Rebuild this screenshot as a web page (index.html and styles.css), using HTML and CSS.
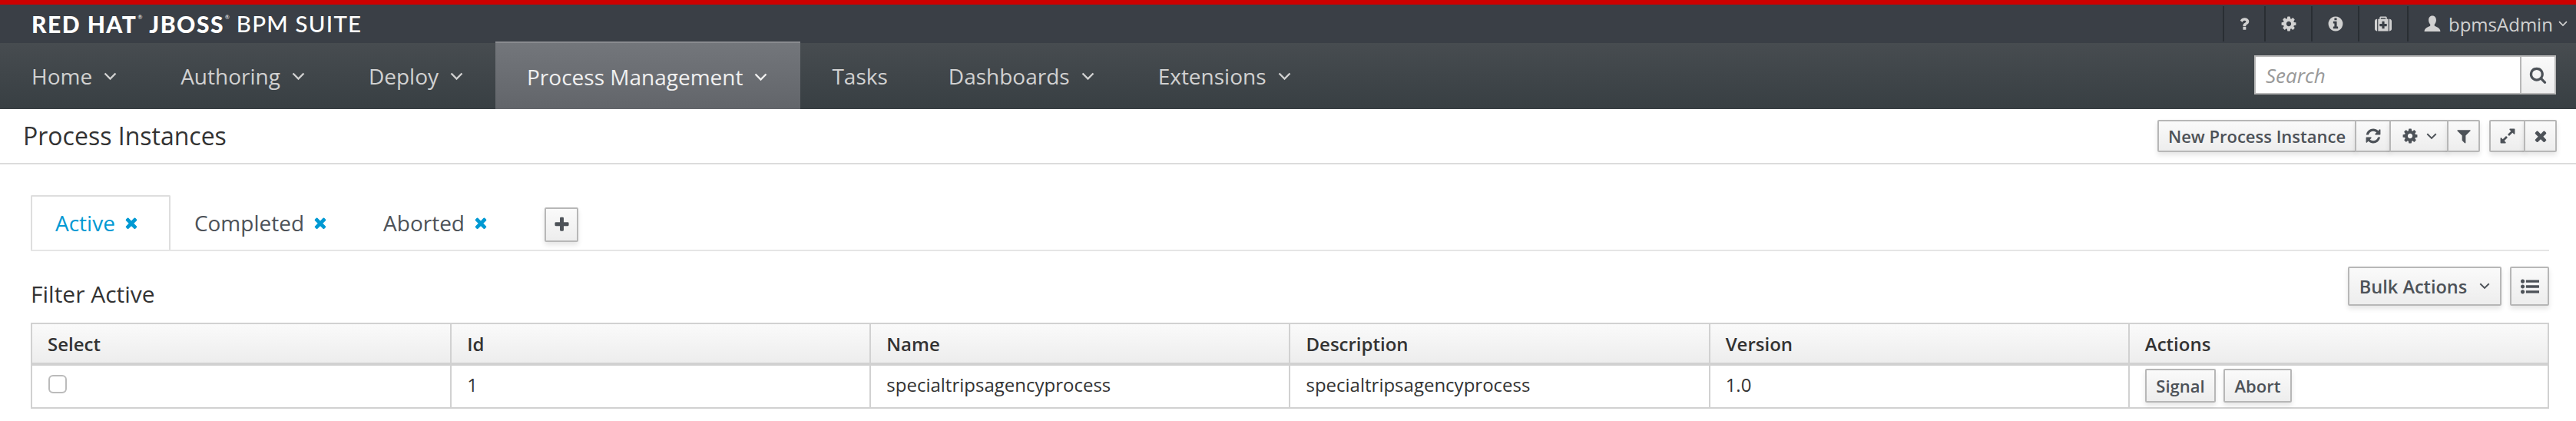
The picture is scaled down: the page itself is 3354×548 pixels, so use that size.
FILE: index.html
```html
<!DOCTYPE html>
<html lang="en">
<head>
<meta charset="utf-8">
<title>Process Instances</title>
<link rel="stylesheet" href="styles.css">
</head>
<body>
<svg class="defs" width="0" height="0" aria-hidden="true">
  <defs>
    <symbol id="i-cog" viewBox="0 0 1792 1792"><path d="M1152 896q0-106-75-181t-181-75-181 75-75 181 75 181 181 75 181-75 75-181zm512-109v222q0 12-8 23t-20 13l-185 28q-19 54-39 91 35 50 107 138 10 12 10 25t-9 23q-27 37-99 108t-94 71q-12 0-26-9l-138-108q-44 23-91 38-16 136-29 186-7 28-36 28h-222q-14 0-24.5-8.5t-11.5-21.5l-28-184q-49-16-90-37l-141 107q-10 9-25 9-14 0-25-11-126-114-165-168-7-10-7-23 0-12 8-23 15-21 51-66.5t54-70.5q-27-50-41-99l-183-27q-13-2-21-12.5t-8-23.5v-222q0-12 8-23t19-13l186-28q14-46 39-92-40-57-107-138-10-12-10-24 0-10 9-23 26-36 98.5-107.5t94.5-71.5q13 0 26 10l138 107q44-23 91-38 16-136 29-186 7-28 36-28h222q14 0 24.5 8.5t11.5 21.5l28 184q49 16 90 37l142-107q9-9 24-9 13 0 25 10 129 119 165 170 7 8 7 22 0 12-8 23-15 21-51 66.5t-54 70.5q26 50 41 98l183 28q13 2 21 12.5t8 23.5z"/></symbol>
    <symbol id="i-info" viewBox="0 0 1792 1792"><path d="M1152 1376v-160q0-14-9-23t-23-9h-96v-512q0-14-9-23t-23-9h-320q-14 0-23 9t-9 23v160q0 14 9 23t23 9h96v320h-96q-14 0-23 9t-9 23v160q0 14 9 23t23 9h448q14 0 23-9t9-23zm-128-896v-160q0-14-9-23t-23-9h-192q-14 0-23 9t-9 23v160q0 14 9 23t23 9h192q14 0 23-9t9-23zm640 416q0 209-103 385.5t-279.5 279.5-385.5 103-385.5-103-279.5-279.5-103-385.5 103-385.5 279.5-279.5 385.5-103 385.5 103 279.5 279.5 103 385.5z"/></symbol>
    <symbol id="i-medkit" viewBox="0 0 1792 1792"><path d="M1280 1120v-192q0-14-9-23t-23-9h-224v-224q0-14-9-23t-23-9h-192q-14 0-23 9t-9 23v224h-224q-14 0-23 9t-9 23v192q0 14 9 23t23 9h224v224q0 14 9 23t23 9h192q14 0 23-9t9-23v-224h224q14 0 23-9t9-23zm-640-736h512v-128h-512v128zm-384 0v1280h-32q-92 0-158-66t-66-158v-832q0-92 66-158t158-66h32zm1184 0v1280h-1088v-1280h160v-160q0-40 28-68t68-28h576q40 0 68 28t28 68v160h160zm352 224v832q0 92-66 158t-158 66h-32v-1280h32q92 0 158 66t66 158z"/></symbol>
    <symbol id="i-question" viewBox="0 0 1792 1792"><path d="M1088 1256v240q0 16-12 28t-28 12h-240q-16 0-28-12t-12-28v-240q0-16 12-28t28-12h240q16 0 28 12t12 28zm316-600q0 54-15.5 101t-35 76.5-55 59.5-57.5 43.5-61 35.5q-41 23-68.5 65t-27.5 67q0 17-12 32.5t-28 15.5h-240q-15 0-25.5-18.5t-10.5-37.5v-45q0-83 65-156.5t143-108.5q59-27 84-56t25-76q0-42-46.5-74t-107.5-32q-65 0-108 29-35 25-107 115-13 16-31 16-12 0-25-8l-164-125q-13-10-15.5-25t5.5-28q160-266 464-266 80 0 161 31t146 83 106 127.5 41 158.5z"/></symbol>
    <symbol id="i-user" viewBox="0 0 40 40"><path d="M20 1c6 0 9 4.500 9 10.500 0 4-1.600 7.500-3.800 9.800-.6.700-.6 2.700.3 3.500 2.300 2 13 3.700 13.500 13.200H1c.5-9.500 11.200-11.200 13.500-13.200.9-.8.900-2.800.3-3.500C12.600 19 11 15.500 11 11.500 11 5.500 14 1 20 1z"/></symbol>
    <symbol id="i-refresh" viewBox="0 0 1792 1792"><path d="M1639 1056q0 5-1 7-64 268-268 434.500t-478 166.500q-146 0-282.500-55t-243.500-157l-129 129q-19 19-45 19t-45-19-19-45v-448q0-26 19-45t45-19h448q26 0 45 19t19 45-19 45l-137 137q71 66 161 102t187 36q134 0 250-65t186-179q11-17 53-117 8-23 30-23h192q13 0 22.500 9.500t9.500 22.500zm25-800v448q0 26-19 45t-45 19h-448q-26 0-45-19t-19-45 19-45l138-138q-148-137-349-137-134 0-250 65t-186 179q-11 17-53 117-8 23-30 23h-199q-13 0-22.500-9.500t-9.500-22.500v-7q65-268 270-434.500t480-166.500q146 0 284 55.500t245 156.500l130-129q19-19 45-19t45 19 19 45z"/></symbol>
    <symbol id="i-filter" viewBox="0 0 1792 1792"><path d="M1595 295q17 41-14 70l-493 493v742q0 42-39 59-13 5-25 5-27 0-45-19l-256-256q-19-19-19-45v-486l-493-493q-31-29-14-70 17-39 59-39h1280q42 0 59 39z"/></symbol>
    <symbol id="i-expand" viewBox="0 0 1792 1792"><path d="M883 1056q0 13-10 23l-332 332 144 144q19 19 19 45t-19 45-45 19h-448q-26 0-45-19t-19-45v-448q0-26 19-45t45-19 45 19l144 144 332-332q10-10 23-10t23 10l114 114q10 10 10 23zm781-864v448q0 26-19 45t-45 19-45-19l-144-144-332 332q-10 10-23 10t-23-10l-114-114q-10-10-10-23t10-23l332-332-144-144q-19-19-19-45t19-45 45-19h448q26 0 45 19t19 45z"/></symbol>
    <symbol id="i-times" viewBox="0 0 1792 1792"><path d="M1490 1322q0 40-28 68l-136 136q-28 28-68 28t-68-28l-294-294-294 294q-28 28-68 28t-68-28l-136-136q-28-28-28-68t28-68l294-294-294-294q-28-28-28-68t28-68l136-136q28-28 68-28t68 28l294 294 294-294q28-28 68-28t68 28l136 136q28 28 28 68t-28 68l-294 294 294 294q28 28 28 68z"/></symbol>
    <symbol id="i-plus" viewBox="0 0 1792 1792"><path d="M1600 736v192q0 40-28 68t-68 28h-416v416q0 40-28 68t-68 28h-192q-40 0-68-28t-28-68v-416h-416q-40 0-68-28t-28-68v-192q0-40 28-68t68-28h416v-416q0-40 28-68t68-28h192q40 0 68 28t28 68v416h416q40 0 68 28t28 68z"/></symbol>
    <symbol id="i-search" viewBox="0 0 1792 1792"><path d="M1216 832q0-185-131.500-316.500t-316.500-131.500-316.500 131.500-131.500 316.500 131.500 316.500 316.500 131.500 316.500-131.500 131.500-316.500zm512 832q0 52-38 90t-90 38q-54 0-90-38l-343-342q-179 124-399 124-143 0-273.500-55.500t-225-150-150-225-55.500-273.500 55.500-273.500 150-225 225-150 273.500-55.500 273.500 55.500 225 150 150 225 55.500 273.500q0 220-124 399l343 343q37 37 37 90z"/></symbol>
    <symbol id="i-list" viewBox="0 0 1792 1792"><path d="M384 1408q0 80-56 136t-136 56-136-56-56-136 56-136 136-56 136 56 56 136zm0-512q0 80-56 136t-136 56-136-56-56-136 56-136 136-56 136 56 56 136zm1408 416v192q0 13-9.500 22.500t-22.500 9.500h-1216q-13 0-22.500-9.500t-9.500-22.500v-192q0-13 9.500-22.500t22.500-9.500h1216q13 0 22.500 9.500t9.500 22.500zm-1408-928q0 80-56 136t-136 56-136-56-56-136 56-136 136-56 136 56 56 136zm1408 416v192q0 13-9.500 22.500t-22.500 9.500h-1216q-13 0-22.500-9.500t-9.500-22.500v-192q0-13 9.500-22.500t22.500-9.500h1216q13 0 22.500 9.500t9.500 22.500zm0-512v192q0 13-9.500 22.500t-22.500 9.500h-1216q-13 0-22.500-9.500t-9.500-22.500v-192q0-13 9.500-22.500t22.500-9.500h1216q13 0 22.500 9.500t9.500 22.500z"/></symbol>
    <symbol id="i-caret" viewBox="0 0 17 11"><path d="M1.500 1.500 8.500 8.500l7-7" fill="none" stroke="currentColor" stroke-width="2.400"/></symbol>
  </defs>
</svg>

<header class="masthead">
  <div class="logo">
    <span class="logo-strong">RED HAT</span><sup class="logo-mark">®</sup>
    <span class="logo-strong">JBOSS</span><sup class="logo-mark">®</sup>
    <span class="logo-light">BPM SUITE</span>
  </div>
  <ul class="util">
    <li class="util-item util-help"><svg class="util-ic"><use href="#i-question"/></svg></li>
    <li class="util-item util-cog"><svg class="util-ic"><use href="#i-cog"/></svg></li>
    <li class="util-item util-info"><svg class="util-ic"><use href="#i-info"/></svg></li>
    <li class="util-item util-med"><svg class="util-ic"><use href="#i-medkit"/></svg></li>
    <li class="util-item util-user"><svg class="util-ic-user"><use href="#i-user"/></svg><span>bpmsAdmin</span><svg class="caret"><use href="#i-caret"/></svg></li>
  </ul>
</header>

<nav class="nav">
  <a class="nav-item nav-drop">Home<svg class="caret"><use href="#i-caret"/></svg></a>
  <a class="nav-item nav-drop">Authoring<svg class="caret"><use href="#i-caret"/></svg></a>
  <a class="nav-item nav-drop">Deploy<svg class="caret"><use href="#i-caret"/></svg></a>
  <a class="nav-item nav-drop nav-active">Process Management<svg class="caret"><use href="#i-caret"/></svg></a>
  <a class="nav-item nav-plain">Tasks</a>
  <a class="nav-item nav-drop">Dashboards<svg class="caret"><use href="#i-caret"/></svg></a>
  <a class="nav-item nav-drop">Extensions<svg class="caret"><use href="#i-caret"/></svg></a>
  <form class="search">
    <input class="search-input" type="text" placeholder="Search">
    <button class="search-btn" type="button"><svg class="ic-search"><use href="#i-search"/></svg></button>
  </form>
</nav>

<div class="titlebar">
  <h1 class="title">Process Instances</h1>
  <div class="tools">
    <div class="btn-group">
      <button class="btn btn-new" type="button">New Process Instance</button>
      <button class="btn btn-refresh" type="button"><svg class="ic"><use href="#i-refresh"/></svg></button>
      <button class="btn btn-gear" type="button"><svg class="ic"><use href="#i-cog"/></svg><svg class="caret"><use href="#i-caret"/></svg></button>
      <button class="btn btn-filter" type="button"><svg class="ic"><use href="#i-filter"/></svg></button>
    </div>
    <div class="btn-group">
      <button class="btn btn-expand" type="button"><svg class="ic"><use href="#i-expand"/></svg></button>
      <button class="btn btn-close" type="button"><svg class="ic"><use href="#i-times"/></svg></button>
    </div>
  </div>
</div>

<main class="content">
  <div class="tabs">
    <a class="tab tab-active">Active<svg class="tab-x"><use href="#i-times"/></svg></a>
    <a class="tab">Completed<svg class="tab-x"><use href="#i-times"/></svg></a>
    <a class="tab">Aborted<svg class="tab-x"><use href="#i-times"/></svg></a>
    <button class="btn btn-plus" type="button"><svg class="ic"><use href="#i-plus"/></svg></button>
  </div>

  <div class="filter-row">
    <h2 class="filter-title">Filter Active</h2>
    <div class="filter-tools">
      <button class="btn btn-bulk" type="button">Bulk Actions<svg class="caret"><use href="#i-caret"/></svg></button>
      <button class="btn btn-list" type="button"><svg class="ic"><use href="#i-list"/></svg></button>
    </div>
  </div>

  <table class="grid">
    <thead>
      <tr><th>Select</th><th>Id</th><th>Name</th><th>Description</th><th>Version</th><th>Actions</th></tr>
    </thead>
    <tbody>
      <tr>
        <td><span class="check"></span></td>
        <td>1</td>
        <td>specialtripsagencyprocess</td>
        <td>specialtripsagencyprocess</td>
        <td>1.0</td>
        <td class="cell-actions"><button class="btn btn-sm" type="button">Signal</button><button class="btn btn-sm" type="button">Abort</button></td>
      </tr>
    </tbody>
  </table>
</main>
</body>
</html>
```

FILE: styles.css
```css
* { box-sizing: border-box; }

html, body { margin: 0; padding: 0; background: #fff; }

body {
  font-family: "Open Sans", "Liberation Sans", sans-serif;
  font-size: 24px;
  color: #333;
  overflow: hidden;
}

.defs { display: block; height: 0; }

/* masthead */
.masthead {
  height: 56px;
  border-top: 6px solid #cc0000;
  background: #3a3f46;
  display: flex;
  align-items: stretch;
  justify-content: space-between;
  padding: 2px 0;
}

.logo {
  font-family: Lato, "Liberation Sans", sans-serif;
  color: #fff;
  font-size: 30px;
  line-height: 46px;
  padding-left: 41px;
  white-space: nowrap;
  display: flex;
  align-items: center;
}

.logo-strong { font-weight: 900; letter-spacing: 1.5px; }
.logo-light { font-weight: 500; font-size: 29.5px; letter-spacing: 1.2px; }
.logo-mark { font-size: 7px; line-height: 1; align-self: flex-start; margin: 11px 9px 0 1px; }

.util {
  list-style: none;
  margin: 0;
  padding: 0;
  display: flex;
}

.util-item {
  border-left: 2px solid #292e33;
  display: flex;
  align-items: center;
  justify-content: center;
  color: #d1d1d1;
}

.util-help { width: 54px; }
.util-cog { width: 61px; }
.util-info { width: 61px; }
.util-med { width: 64px; }
.util-user { width: 220px; justify-content: flex-start; padding-left: 20px; font-size: 24px; }
.util-user .caret { width: 12px; height: 8px; margin-left: 7px; }

.util-ic { width: 22px; height: 22px; fill: currentColor; }
.util-ic-user { width: 22px; height: 22px; fill: currentColor; margin-right: 10px; }

.caret { width: 17px; height: 11px; margin-left: 15px; color: inherit; }

/* primary nav */
.nav {
  height: 86px;
  background: linear-gradient(#474c50, #383f43);
  display: flex;
  align-items: stretch;
  color: #d1d1d1;
}

.nav-item {
  display: flex;
  align-items: center;
  padding: 0 41px;
  font-size: 28px;
  white-space: nowrap;
  line-height: 1;
}

.nav-drop { padding-right: 42px; }
.nav-plain { padding-right: 38px; }

.nav-active {
  height: 88px;
  margin-top: -2px;
  padding-top: 2px;
  padding-right: 43px;
  border-top: 2px solid #8a8c90;
  background: linear-gradient(#73767b, #62656a);
  color: #f0f0f0;
}

.search {
  margin: 16px 26px 0 auto;
  display: flex;
  height: 51px;
}

.search-input {
  width: 346px;
  height: 51px;
  border: 2px solid #b7b7b7;
  border-right: 0;
  padding: 0 13px;
  font-family: "Open Sans", sans-serif;
  font-size: 26px;
  font-style: italic;
  background: #fff;
  outline: 0;
}

.search-input::placeholder { color: #999; opacity: 1; }

.search-btn {
  width: 47px;
  height: 51px;
  border: 2px solid #b7b7b7;
  background: linear-gradient(#fafafa, #ededed);
  color: #4d5258;
  padding: 0;
  display: flex;
  align-items: center;
  justify-content: center;
}

.ic-search { width: 23px; height: 23px; fill: currentColor; }

/* title bar */
.titlebar {
  height: 72px;
  border-bottom: 2px solid #dcdcdc;
  display: flex;
  justify-content: space-between;
  padding: 14px 25px 0 30px;
}

.title {
  margin: 0;
  font-weight: 400;
  font-size: 32px;
  line-height: 42px;
  color: #333;
}

.tools { display: flex; gap: 12px; }

.btn-group { display: flex; height: 42px; }
.btn-group .btn + .btn { margin-left: -2px; }

.btn {
  font-family: "Open Sans", sans-serif;
  font-weight: 600;
  font-size: 22px;
  color: #4d5258;
  background: linear-gradient(#fafafa, #ededed);
  border: 2px solid #b7b7b7;
  border-radius: 2px;
  box-shadow: 0 4px 6px rgba(3, 3, 3, .1);
  padding: 0;
  display: flex;
  align-items: center;
  justify-content: center;
  white-space: nowrap;
}

.ic { width: 22px; height: 22px; fill: currentColor; }

.btn-new { width: 259px; }
.btn-refresh { width: 47px; }
.btn-gear { width: 77px; }
.btn-gear .caret { width: 14px; height: 9px; margin-left: 10px; }
.btn-filter { width: 43px; }
.btn-expand { width: 47px; }
.btn-close { width: 43px; }

/* content */
.content { padding: 40px 35px 0 40px; }

.tabs {
  display: flex;
  align-items: flex-start;
  border-bottom: 2px solid #e5e5e5;
  height: 73px;
}

.tab {
  height: 71px;
  padding: 0 38px 2px 29px;
  border: 2px solid transparent;
  border-bottom: 0;
  display: flex;
  align-items: center;
  font-size: 28px;
  color: #4d5258;
  white-space: nowrap;
}

.tab-active {
  padding: 0 38px 2px 30px;
  color: #0099d3;
  border-color: #dedede;
  border-radius: 2px 2px 0 0;
}

.tab-x { width: 22px; height: 22px; margin-left: 10px; fill: #0099d3; }

.btn-plus { width: 44px; height: 45px; margin: 16px 0 0 32px; }
.btn-plus .ic { width: 23px; height: 23px; }

.filter-row {
  display: flex;
  justify-content: space-between;
  align-items: flex-end;
  margin-top: 20px;
  margin-bottom: 22px;
}

.filter-title {
  margin: 0 0 -4px;
  font-weight: 400;
  font-size: 30px;
  line-height: 38px;
  color: #333;
}

.filter-tools { display: flex; gap: 11px; }

.btn-bulk { width: 200px; height: 51px; font-size: 23.5px; }
.btn-bulk .caret { width: 14px; height: 9px; margin-left: 16px; }
.btn-list { width: 51px; height: 51px; }
.btn-list .ic { width: 24px; height: 24px; }

.grid {
  width: 100%;
  table-layout: fixed;
  border-collapse: collapse;
}

.grid th, .grid td {
  border: 2px solid #d1d1d1;
  text-align: left;
  padding: 0 20px;
  vertical-align: middle;
}

.grid th {
  height: 53px;
  font-size: 24px;
  font-weight: 600;
  color: #333;
  background: linear-gradient(#fafafa, #ededed);
  border-bottom-width: 4px;
}

.grid td {
  height: 57px;
  padding-bottom: 6px;
  font-size: 24px;
  color: #333;
}

.check {
  display: block;
  width: 24px;
  height: 24px;
  margin-left: 1px;
  border: 2px solid #bbb;
  border-radius: 6px;
  background: #fff;
}

.cell-actions { white-space: nowrap; }
.cell-actions .btn { display: inline-flex; vertical-align: middle; }
.grid td.cell-actions { padding-bottom: 2px; }

.btn-sm { height: 44px; padding: 0 12.5px; margin-right: 10px; }
```
